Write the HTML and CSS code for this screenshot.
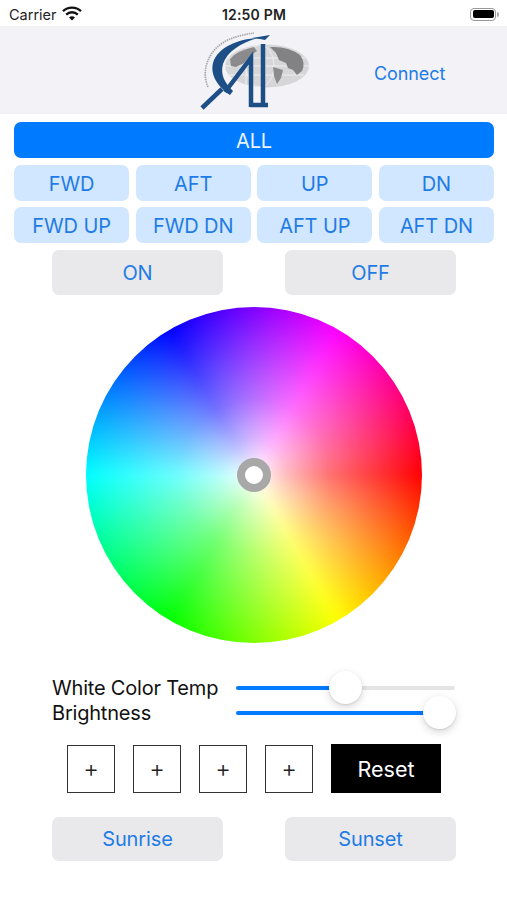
FILE: index.html
```html
<!DOCTYPE html>
<html lang="en">
<head>
<meta charset="utf-8">
<title>ALI Lighting</title>
<link rel="stylesheet" href="styles.css">
</head>
<body>
<div class="screen">
  <header class="status">
    <div class="status-left">
      <span>Carrier</span>
      <svg class="wifi" viewBox="0 0 20 15" width="20" height="15">
        <path d="M1 5.2a13 13 0 0 1 18 0M4.2 8.6a8.4 8.4 0 0 1 11.6 0" fill="none" stroke="#111" stroke-width="2.4"/>
        <path d="M7 11.6a4.3 4.3 0 0 1 6 0L10 14.6z" fill="#111"/>
      </svg>
    </div>
    <div class="status-time">12:50 PM</div>
    <div class="status-right">
      <span class="battery"><span class="battery-level"></span></span><span class="battery-cap"></span>
    </div>
  </header>

  <nav class="navbar">
    <svg class="logo" viewBox="0 1 150 88" width="150" height="88">
      <ellipse cx="87" cy="41" rx="42" ry="21.5" fill="#d6d6d9"/>
      <g fill="none" stroke="#eeeef1" stroke-width="1">
        <ellipse cx="80" cy="41" rx="14" ry="21"/>
        <path d="M46 33H125M45 41H129M48 50H124M66 22V61"/>
      </g>
      <path d="M50 34Q56 26 74 22L77 26 71 30 64 38 56 42 51 41z" fill="#8b8b8e"/>
      <path d="M90 22Q108 21 120 30 126 38 122 46L117 50 113 45 108 43 106 38 99 35 96 28z" fill="#828285"/>
      <path d="M93 42L103 45 101 53 97 59 94 51z" fill="#8b8b8e"/>
      <path d="M28 62C20 44 30 22 50 14 58 11 66 9 74 8" fill="none" stroke="#a6a6aa" stroke-width="1.6" stroke-dasharray="1.5 .8"/>
      <path d="M78 13C58 14 38 22 33 38 30 50 38 62 50 70L53 66C45 58 40 50 43 39 47 27 60 18 78 13z" fill="#1d4f86"/>
      <path d="M72 13L90 10 85 15 80 14z" fill="#1d4f86"/>
      <path d="M22 83L42 64" stroke="#1d4f86" stroke-width="4.5" fill="none"/>
      <path d="M45 67L71 33V82" stroke="#1d4f86" stroke-width="4.5" fill="none"/>
      <path d="M83 19V80" stroke="#1d4f86" stroke-width="4.5" fill="none"/>
      <path d="M70 80H88" stroke="#1d4f86" stroke-width="4.5" fill="none"/>
    </svg>
    <a class="connect">Connect</a>
  </nav>

  <main class="content">
    <button class="btn btn-all">ALL</button>
    <div class="zone-grid">
      <button class="btn btn-zone">FWD</button>
      <button class="btn btn-zone">AFT</button>
      <button class="btn btn-zone">UP</button>
      <button class="btn btn-zone">DN</button>
      <button class="btn btn-zone">FWD UP</button>
      <button class="btn btn-zone">FWD DN</button>
      <button class="btn btn-zone">AFT UP</button>
      <button class="btn btn-zone">AFT DN</button>
    </div>
    <div class="pair pair-power">
      <button class="btn btn-grey">ON</button>
      <button class="btn btn-grey">OFF</button>
    </div>

    <div class="wheel">
      <div class="wheel-knob"></div>
    </div>

    <div class="sliders">
      <div class="slider-row">
        <span class="slider-label">White Color Temp</span>
        <div class="slider">
          <div class="slider-fill fill-temp"></div>
          <div class="slider-thumb thumb-temp"></div>
        </div>
      </div>
      <div class="slider-row">
        <span class="slider-label">Brightness</span>
        <div class="slider">
          <div class="slider-fill fill-bright"></div>
          <div class="slider-thumb thumb-bright"></div>
        </div>
      </div>
    </div>

    <div class="presets">
      <button class="preset">+</button>
      <button class="preset">+</button>
      <button class="preset">+</button>
      <button class="preset">+</button>
      <button class="reset">Reset</button>
    </div>

    <div class="pair pair-scene">
      <button class="btn btn-grey">Sunrise</button>
      <button class="btn btn-grey">Sunset</button>
    </div>
  </main>
</div>
</body>
</html>
```
FILE: styles.css
```css
* { box-sizing: border-box; }
html, body { margin: 0; padding: 0; background: #fff; }
body { font-family: Inter, "Liberation Sans", sans-serif; color: #111; }
.screen { width: 507px; height: 900px; overflow: hidden; }

.status {
  height: 26px;
  display: grid;
  grid-template-columns: 1fr auto 1fr;
  align-items: center;
  padding: 2px 8px 0 9px;
  font-size: 14.5px;
  color: #222;
}
.status-left { display: flex; align-items: center; gap: 5px; }
.wifi { display: block; margin-top: -2px; }
.status-time { font-weight: 600; font-size: 14px; letter-spacing: 0.2px; }
.status-right { display: flex; justify-content: flex-end; align-items: center; }
.battery {
  width: 26px; height: 13px;
  border: 1px solid #999;
  border-radius: 4px;
  padding: 1.5px;
  display: block;
}
.battery-level { display: block; height: 100%; background: #000; border-radius: 2px; }
.battery-cap { width: 2px; height: 5px; background: #aaa; border-radius: 0 2px 2px 0; margin-left: 1px; }

.navbar {
  height: 88px;
  background: #f2f2f7;
  display: flex;
  align-items: center;
  padding-left: 180px;
}
.logo { display: block; filter: blur(0.5px); }
.connect { margin-left: 44px; color: #1f7ce6; font-size: 18px; letter-spacing: -0.1px; margin-top: 6px; }

.content { padding: 8px 13px 0 14px; }

.btn {
  border: 0;
  font-family: inherit;
  font-size: 20px;
  letter-spacing: -0.1px;
  color: #1f7ce6;
  padding: 0;
  border-radius: 7px;
}
.btn-all { display: block; width: 100%; height: 36px; padding-top: 2px; background: #007aff; color: #eaf3ff; }
.zone-grid {
  margin-top: 7px;
  display: grid;
  grid-template-columns: repeat(4, 1fr);
  grid-auto-rows: 36px;
  column-gap: 6.5px;
  row-gap: 6px;
}
.btn-zone { background: #d1e6ff; padding-top: 2px; }

.pair { display: grid; grid-template-columns: 171px 171px; column-gap: 62px; padding-left: 38px; }
.pair-power { margin-top: 7px; }
.btn-grey { height: 45px; background: #e9e9eb; }

.wheel {
  position: relative;
  overflow: hidden;
  width: 336px; height: 336px;
  margin: 12px 0 0 72px;
  border-radius: 50%;
  display: flex;
  align-items: center;
  justify-content: center;
}
.wheel::before {
  content: "";
  position: absolute;
  inset: -24px;
  background: conic-gradient(from 30deg, #f0f, #f00 60deg, #ff0 120deg, #0f0 180deg, #0ff 240deg, #00f 300deg, #f0f 360deg);
  filter: blur(5px);
}
.wheel::after {
  content: "";
  position: absolute;
  inset: 0;
  background: radial-gradient(circle closest-side, #fff 0%, rgba(255,255,255,.72) 20%, rgba(255,255,255,.44) 45%, rgba(255,255,255,0) 100%);
}
.wheel-knob {
  position: relative;
  z-index: 1;
  width: 34px; height: 34px;
  border-radius: 50%;
  border: 8px solid #a8a8a8;
  background: #fff;
}

.sliders { margin-top: 32px; padding-left: 38px; }
.slider-row { height: 25px; display: flex; align-items: center; }
.slider-label { width: 184px; font-size: 20px; letter-spacing: -0.2px; color: #111; white-space: nowrap; }
.slider { position: relative; width: 219px; height: 4px; background: #e4e4e6; border-radius: 2px; }
.slider-fill { height: 100%; background: #007aff; border-radius: 2px; }
.fill-temp { width: 50%; }
.fill-bright { width: 93%; }
.slider-thumb {
  position: absolute;
  top: -14.5px;
  width: 33px; height: 33px;
  border-radius: 50%;
  background: #fff;
  box-shadow: 0 3px 8px rgba(0,0,0,.16), 0 1px 2px rgba(0,0,0,.1);
}
.thumb-temp { left: 93px; }
.thumb-bright { left: 187px; }

.presets { margin-top: 19px; padding-left: 53px; display: flex; align-items: center; }
.preset {
  width: 48px; height: 48px;
  margin-right: 18px;
  background: #fff;
  border: 1.5px solid #333;
  font-family: inherit;
  font-size: 24px;
  font-weight: 300;
  color: #222;
  padding: 0;
}
.reset {
  width: 110px; height: 49px;
  border: 0;
  background: #000;
  color: #fff;
  font-family: inherit;
  font-size: 21.5px;
  padding: 0;
}
.pair-scene { margin-top: 24px; }
.pair-scene .btn-grey { height: 44px; }
```
